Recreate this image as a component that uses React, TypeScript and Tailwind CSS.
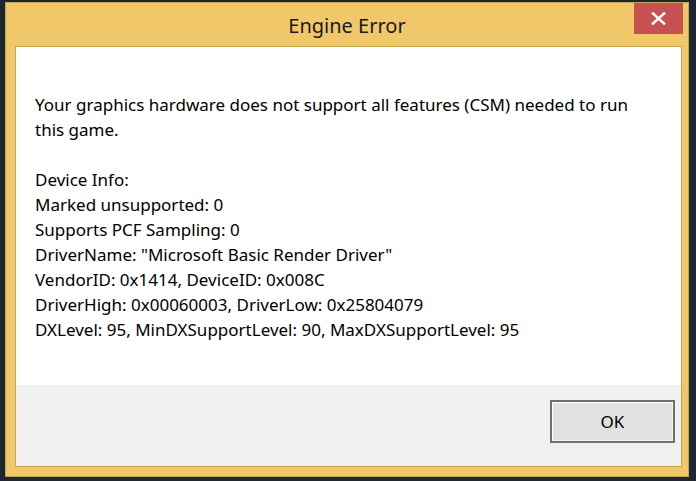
import React from "react";

const lines = [
  "Your graphics hardware does not support all features (CSM) needed to run",
  "this game.",
  "",
  "Device Info:",
  "Marked unsupported: 0",
  "Supports PCF Sampling: 0",
  'DriverName: "Microsoft Basic Render Driver"',
  "VendorID: 0x1414, DeviceID: 0x008C",
  "DriverHigh: 0x00060003, DriverLow: 0x25804079",
  "DXLevel: 95, MinDXSupportLevel: 90, MaxDXSupportLevel: 95",
];

function CloseIcon() {
  return (
    <svg width="15" height="13" viewBox="0 0 15 13">
      <path d="M1 0.5 L14 12.5 M14 0.5 L1 12.5" stroke="#fff" strokeWidth="2.4" />
    </svg>
  );
}

export default function App() {
  return (
    <div
      className="h-[481px] w-[696px] overflow-hidden bg-[#1c2730] pl-[5px] pt-[2px]"
      style={{ fontFamily: '"Noto Sans", "Open Sans", sans-serif' }}
    >
      <div className="flex h-[475px] w-[684px] flex-col border border-[#c7a450] bg-[#f0c86a]">
        <div className="relative flex h-[43px] items-center justify-center">
          <span className="pt-[2px] text-[20px] text-[#1a1a1a]">Engine Error</span>
          <button className="absolute right-[5px] top-0 flex h-[31px] w-[49px] items-center justify-center bg-[#c75050]">
            <CloseIcon />
          </button>
        </div>
        <div className="mb-[9px] ml-[9px] mr-[6px] flex flex-1 flex-col border border-[#c9a550]">
          <div className="h-[338px] bg-white pl-[19px] pt-[45px] text-[17px] leading-[25px] text-black">
            {lines.map((l, i) => (
              <div key={i} className="h-[25px] whitespace-nowrap">
                {l}
              </div>
            ))}
          </div>
          <div className="flex flex-1 items-start justify-end bg-[#f0f0f0] pr-[6px] pt-[15px]">
            <button className="flex h-[43px] w-[125px] items-center justify-center border-2 border-[#707070] bg-[#e1e1e1] text-[17px] text-black shadow-[inset_1px_1px_0_#fff,inset_-1px_-1px_0_#f4f4f4]">
              OK
            </button>
          </div>
        </div>
      </div>
    </div>
  );
}
